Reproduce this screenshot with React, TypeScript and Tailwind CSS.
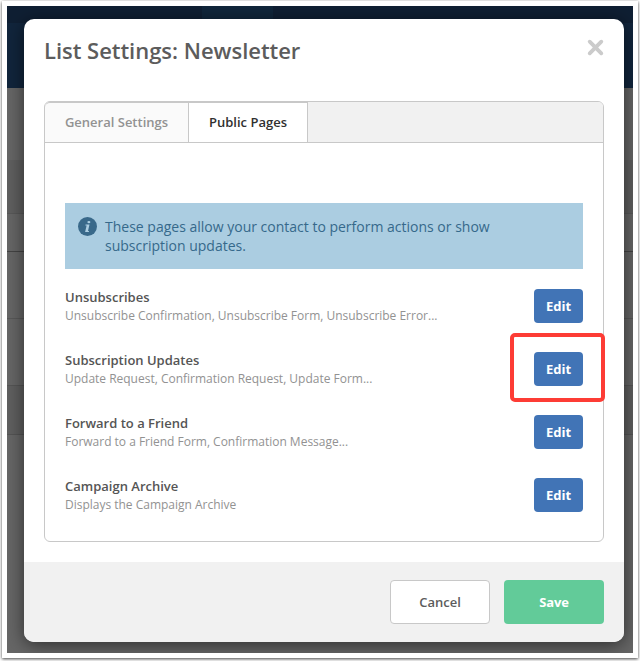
import React from 'react';

const pages = [
  { title: 'Unsubscribes', description: 'Unsubscribe Confirmation, Unsubscribe Form, Unsubscribe Error...' },
  { title: 'Subscription Updates', description: 'Update Request, Confirmation Request, Update Form...', highlighted: true },
  { title: 'Forward to a Friend', description: 'Forward to a Friend Form, Confirmation Message...' },
  { title: 'Campaign Archive', description: 'Displays the Campaign Archive' },
];

function Backdrop() {
  return (
    <div className="col-start-1 row-start-1 flex flex-col bg-[#666666]">
      <div className="flex h-[17px] bg-[#0f1f33]">
        <div className="ml-[195px] w-[71px] bg-[#10263b]" />
      </div>
      <div className="h-[65px] bg-[#11253c]" />
      <div className="h-[72px]" />
      <div className="h-[54px] border-b border-[#585858] bg-[#5f5f5f]" />
      <div className="h-[38px] border-b border-[#444444]" />
      <div className="h-[67px] border-b border-[#585858]" />
      <div className="h-[67px] border-b border-[#555555]" />
      <div className="h-[49px] border-b border-[#545454] bg-[#5f5f5f]" />
    </div>
  );
}

function InfoIcon() {
  return (
    <svg viewBox="0 0 19 19" className="h-[19px] w-[19px] shrink-0" fill="none">
      <circle cx="9.5" cy="9.5" r="9.5" fill="#39698a" />
      <ellipse cx="10.9" cy="5.1" rx="1.5" ry="1.2" fill="#abcde1" />
      <path d="M7.6 7.4h3.9l-1.5 6.5h1.1l-.3 1.1H7.1l1.5-6.4H7.3z" fill="#abcde1" />
    </svg>
  );
}

export default function App() {
  return (
    <div className="h-[661px] w-[640px] overflow-hidden bg-white pt-px pl-[2px] font-['Open_Sans',sans-serif]">
      <div className="grid h-[657px] w-[636px] bg-white p-[5px] shadow-[0_1px_3px_rgba(0,0,0,0.75)]">
        <div className="grid h-[647px] w-[626px] overflow-hidden">
          <Backdrop />

          <div className="z-10 col-start-1 row-start-1 mt-[13px] ml-[17px] flex h-[623px] w-[600px] flex-col overflow-hidden rounded-[10px] bg-white shadow-[0_3px_18px_rgba(0,0,0,0.55)]">
            <div className="flex h-[82px] shrink-0 items-start justify-between px-[20px]">
              <h1 className="pt-[14px] text-[22px] leading-[34px] font-semibold tracking-[-0.03px] text-[#5c5c5c]">
                List Settings: Newsletter
              </h1>
              <button aria-label="Close" className="mt-[20px]">
                <svg viewBox="0 0 17 17" className="h-[17px] w-[17px]" stroke="#cbcbcb" strokeWidth="3.8" strokeLinecap="round">
                  <path d="M2.7 2.7l11.6 11.6M14.3 2.7L2.7 14.3" />
                </svg>
              </button>
            </div>

            <div className="mx-[20px] flex h-[441px] shrink-0 flex-col rounded-[6px] border border-[#c8c8c8]">
              <div className="flex h-[41px] shrink-0 rounded-t-[5px] border-b border-[#c8c8c8] bg-[#f1f1f1] text-[13px] font-semibold">
                <button className="w-[144px] rounded-tl-[5px] border-t border-r border-[#c8c8c8] bg-[#fafafa] text-[#929292]">
                  General Settings
                </button>
                <button className="w-[119px] border-t border-r border-[#c8c8c8] bg-white text-[#303030]">
                  Public Pages
                </button>
              </div>

              <div className="px-[20px] pt-[60px]">
                <div className="flex h-[66px] gap-[8px] bg-[#abcde1] pt-[14px] pl-[13px] text-[14px] leading-[19px] text-[#36698b]">
                  <InfoIcon />
                  <p className="w-[400px]">These pages allow your contact to perform actions or show subscription updates.</p>
                </div>

                <div className="pt-[20px]">
                  {pages.map((page) => (
                    <div key={page.title} className="flex h-[63px] items-start justify-between">
                      <div>
                        <h2 className="text-[13px] leading-[16px] font-semibold text-[#555555]">{page.title}</h2>
                        <p className="pt-[2px] text-[12px] leading-[18px] tracking-[-0.01px] text-[#929292]">{page.description}</p>
                      </div>
                      <div className="relative">
                        <button className="h-[34px] w-[49px] rounded-[4px] bg-[#4174b6] pt-[2px] text-[13px] font-bold text-white">
                          Edit
                        </button>
                        {page.highlighted && (
                          <div className="absolute -top-[19px] -left-[24px] h-[69px] w-[95px] rounded-[5px] border-4 border-[#fd3c35]" />
                        )}
                      </div>
                    </div>
                  ))}
                </div>
              </div>
            </div>

            <div className="mt-auto flex h-[80px] shrink-0 items-center justify-end gap-[14px] bg-[#f1f1f1] pr-[20px] text-[13px]">
              <button className="h-[44px] w-[100px] rounded-[4px] border border-[#c8c8c8] bg-white pt-[2px] font-semibold text-[#5c5c5c]">
                Cancel
              </button>
              <button className="h-[44px] w-[100px] rounded-[4px] bg-[#62cb99] pt-[2px] font-bold tracking-[-0.2px] text-white">
                Save
              </button>
            </div>
          </div>
        </div>
      </div>
    </div>
  );
}
